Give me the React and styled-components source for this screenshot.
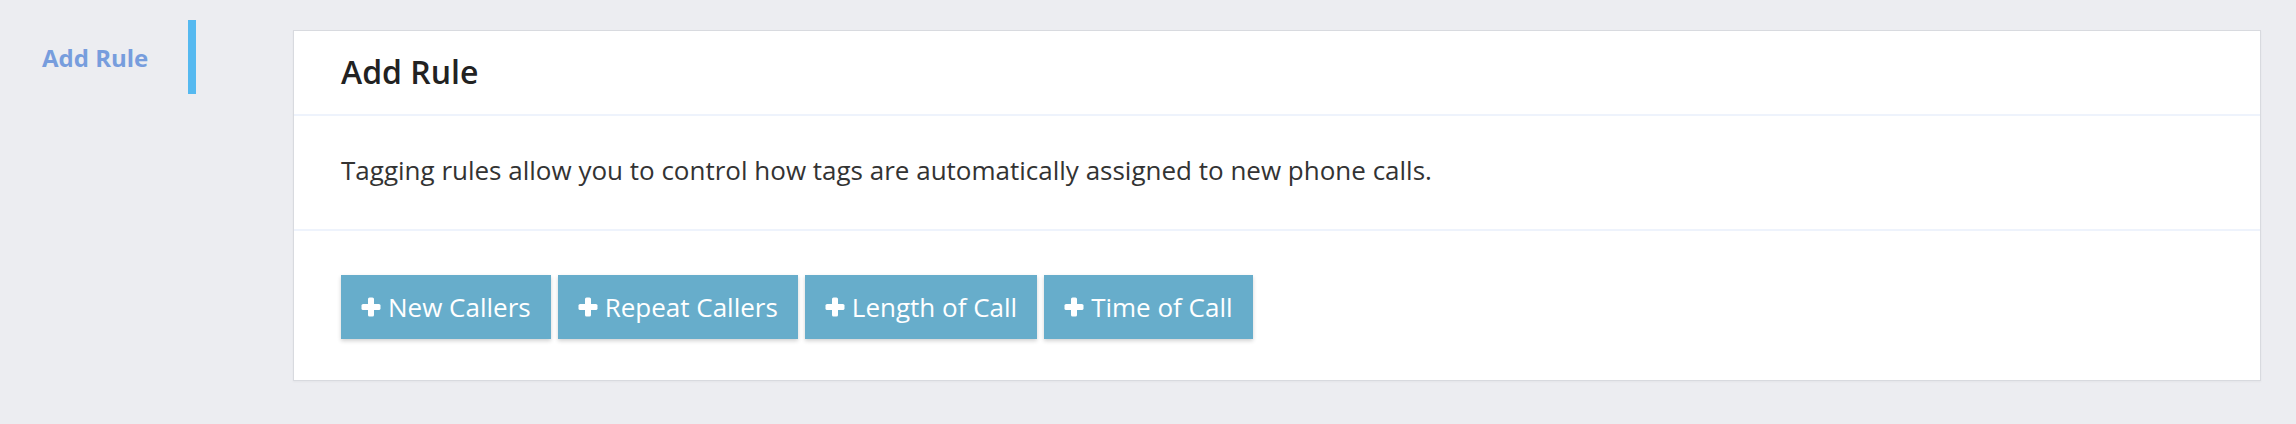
import styled, { createGlobalStyle } from 'styled-components';

const GlobalStyle = createGlobalStyle`
    html, body {
        margin: 0;
        padding: 0;
        background-color: #ecedf1;
        font-family: "Open Sans", "Liberation Sans", sans-serif;
    }
`;

const Page = styled.div`
    display: flex;
    align-items: flex-start;
    gap: 97px;
    padding: 20px 35px 46px 0;
    min-height: 424px;
    box-sizing: border-box;
`;

const Sidebar = styled.nav`
    flex: 0 0 196px;
`;

const SideItem = styled.a`
    display: flex;
    align-items: center;
    height: 74px;
    box-sizing: border-box;
    padding-left: 42px;
    border-right: 8px solid #55b9f0;
    color: #779ddd;
    font-size: 24px;
    font-weight: 700;
    text-decoration: none;
`;

const Card = styled.section`
    flex: 1;
    margin-top: 10px;
    background-color: #fff;
    border: 1px solid #d8dadf;
    box-shadow: 0 1px 2px rgba(0, 0, 0, 0.04);
`;

const Header = styled.header`
    padding: 19px 47px 20px;
    border-bottom: 2px solid #eef3fc;
`;

const Title = styled.h2`
    margin: 0;
    font-size: 32px;
    line-height: 44px;
    font-weight: 600;
    color: #222;
`;

const Body = styled.div`
    padding: 36px 47px 41px;
    border-bottom: 2px solid #eef3fc;
`;

const Text = styled.p`
    margin: 0;
    font-size: 26px;
    line-height: 36px;
    color: #333;
`;

const Footer = styled.div`
    display: flex;
    gap: 7px;
    padding: 44px 47px 41px;
`;

const Button = styled.button`
    display: flex;
    align-items: center;
    gap: 7px;
    height: 64px;
    padding: 0 20px;
    background-color: #67adcb;
    color: #fff;
    border: none;
    border-radius: 0;
    box-shadow: 0 2px 4px rgba(0, 0, 0, 0.18);
    font-family: inherit;
    font-size: 26px;
    cursor: pointer;
`;

const PlusIcon = () => (
    <svg width="20" height="20" viewBox="0 0 20 20" fill="#fff">
        <rect x="7" y="0.5" width="6" height="19" rx="1.6" />
        <rect x="0.5" y="7" width="19" height="6" rx="1.6" />
    </svg>
);

const rules = ['New Callers', 'Repeat Callers', 'Length of Call', 'Time of Call'];

function App() {
    return (
        <>
            <GlobalStyle />
            <Page>
                <Sidebar>
                    <SideItem href="#">Add Rule</SideItem>
                </Sidebar>
                <Card>
                    <Header>
                        <Title>Add Rule</Title>
                    </Header>
                    <Body>
                        <Text>Tagging rules allow you to control how tags are automatically assigned to new phone calls.</Text>
                    </Body>
                    <Footer>
                        {rules.map((r) => (
                            <Button key={r} type="button">
                                <PlusIcon />
                                {r}
                            </Button>
                        ))}
                    </Footer>
                </Card>
            </Page>
        </>
    );
}

export default App;
